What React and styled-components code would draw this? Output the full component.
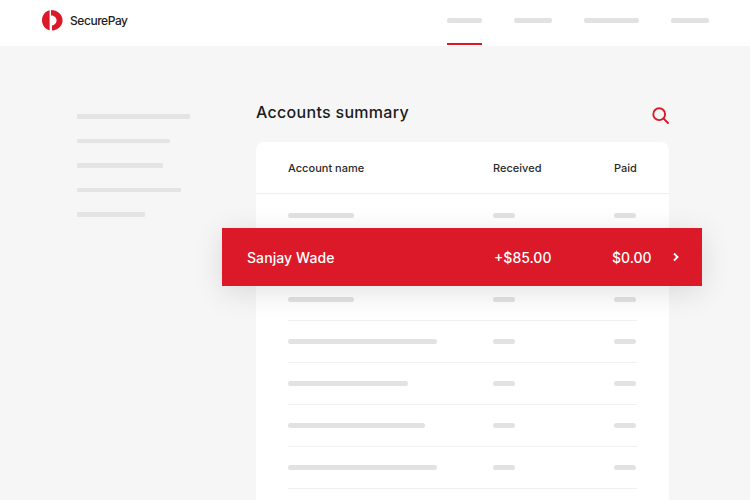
import React from 'react';
import styled, { createGlobalStyle } from 'styled-components';

const Global = createGlobalStyle`
  html, body { margin: 0; padding: 0; height: 100%; overflow: hidden; background: #f6f6f6; }
  body { font-family: Inter, "Liberation Sans", sans-serif; color: #1c1c1c; }
`;

const red = '#dc1928';
const skeleton = '#e2e2e2';

const Page = styled.div`
  width: 750px;
  height: 500px;
  overflow: hidden;
  position: relative;
  background: #f6f6f6;
`;

const Header = styled.header`
  height: 46px;
  box-sizing: border-box;
  padding: 0 41px 1px 42px;
  background: #fff;
  display: flex;
  align-items: center;
  justify-content: space-between;
`;

const Brand = styled.div`
  display: flex;
  align-items: center;
  gap: 7px;
  margin-bottom: 4px;
  font-size: 12px;
  font-weight: 500;
  letter-spacing: -0.45px;
  color: #222;
`;

const Nav = styled.nav`
  display: flex;
  height: 100%;
  gap: 32px;
`;

const NavItem = styled.div`
  height: 100%;
  box-sizing: border-box;
  width: ${({ $w }) => $w}px;
  padding-top: 18px;
  border-bottom: 2px solid ${({ $active }) => ($active ? red : 'transparent')};
`;

const NavBar = styled.div`
  height: 4.5px;
  border-radius: 2px;
  background: ${skeleton};
`;

const Body = styled.div`
  display: flex;
  padding: 0 81px 0 77px;
`;

const Sidebar = styled.aside`
  width: 179px;
  flex-shrink: 0;
  padding-top: 68px;
  display: flex;
  flex-direction: column;
  gap: 20px;
`;

const SideLine = styled.div`
  height: 4.5px;
  width: ${({ $w }) => $w}px;
  border-radius: 1px;
  background: #e4e4e4;
`;

const Main = styled.main`
  flex: 1;
  min-width: 0;
`;

const TitleRow = styled.div`
  height: 96px;
  box-sizing: border-box;
  padding-top: 55px;
  display: flex;
  justify-content: space-between;
  align-items: flex-start;
`;

const Title = styled.h1`
  margin: 0;
  font-size: 16px;
  line-height: 22px;
  font-weight: 500;
  letter-spacing: 0.3px;
  color: #1c1c1c;
`;

const SearchIcon = styled.svg`
  width: 17px;
  height: 17px;
  margin-top: 6px;
`;

const Card = styled.section`
  background: #fff;
  border-radius: 8px 8px 0 0;
  padding: 0 32px;
  height: 400px;
`;

const HeadRow = styled.div`
  display: grid;
  grid-template-columns: 205px 121px 1fr;
  align-items: center;
  height: 51px;
  margin: 0 -32px;
  padding: 0 32px;
  border-bottom: 1px solid #efefef;
`;

const Rows = styled.div`
  padding-top: 1px;
`;

const Row = styled.div`
  display: grid;
  grid-template-columns: 205px 121px 1fr;
  align-items: center;
  height: 41px;
  border-bottom: 1px solid #f0f0f0;
`;

const HeadCell = styled.div`
  font-size: 11px;
  font-weight: 450;
  letter-spacing: 0.02px;
  color: #2a2a2a;
`;

const Bar = styled.div`
  height: 5px;
  border-radius: 2.5px;
  width: ${({ $w }) => $w}px;
  background: ${skeleton};
`;

const Highlight = styled.div`
  position: absolute;
  left: 222px;
  top: 228px;
  width: 480px;
  height: 58px;
  box-sizing: border-box;
  padding: 0 22px 0 25px;
  background: ${red};
  color: #fff;
  display: grid;
  grid-template-columns: 247px 118px 1fr;
  align-items: center;
  font-size: 14px;
  font-weight: 450;
  box-shadow: 0 6px 30px rgba(0, 0, 0, 0.12);
`;

const Name = styled.div`
  letter-spacing: 0.08px;
`;

const Money = styled.div`
  display: flex;
  align-items: center;
  justify-content: space-between;
`;

const accounts = [66, null, 66, 149, 120, 137, 149, 120, 137, 149];

export default function App() {
  return (
    <Page>
      <Global />
      <Header>
        <Brand>
          <svg width="21" height="21" viewBox="0 0 21 21">
            <path d="M7.6 .3C3.2 1.3 0 5.3 0 10.2c0 4.9 3.2 9 7.6 10.2z" fill={red} />
            <path d="M9 0c6.3 0 11.6 4.6 11.6 10.2 0 5.3-4.4 9.6-10.6 10.4v-5.2c2.6-.4 4.6-2.4 4.6-5 0-2.7-2.5-4.8-5.6-4.8z" fill={red} />
          </svg>
          SecurePay
        </Brand>
        <Nav>
          <NavItem $w={35} $active><NavBar /></NavItem>
          <NavItem $w={38}><NavBar /></NavItem>
          <NavItem $w={55}><NavBar /></NavItem>
          <NavItem $w={38}><NavBar /></NavItem>
        </Nav>
      </Header>
      <Body>
        <Sidebar>
          <SideLine $w={113} />
          <SideLine $w={93} />
          <SideLine $w={86} />
          <SideLine $w={104} />
          <SideLine $w={68} />
        </Sidebar>
        <Main>
          <TitleRow>
            <Title>Accounts summary</Title>
            <SearchIcon viewBox="0 0 17 17" fill="none" stroke={red} strokeWidth="1.9">
              <circle cx="7.2" cy="7.2" r="5.9" />
              <path d="M11.4 11.4 L16 16" strokeLinecap="round" />
            </SearchIcon>
          </TitleRow>
          <Card>
            <HeadRow>
              <HeadCell>Account name</HeadCell>
              <HeadCell>Received</HeadCell>
              <HeadCell>Paid</HeadCell>
            </HeadRow>
            <Rows>
              {accounts.map((w, i) => (
                <Row key={i}>
                  {w && <Bar $w={w} />}
                  {w && <Bar $w={22} />}
                  {w && <Bar $w={22} />}
                </Row>
              ))}
            </Rows>
          </Card>
        </Main>
      </Body>
      <Highlight>
        <Name>Sanjay Wade</Name>
        <div>+$85.00</div>
        <Money>
          $0.00
          <svg width="8" height="10" viewBox="0 0 8 10" fill="none" stroke="#fff" strokeWidth="1.9">
            <path d="M2 1.5 L5.5 5 L2 8.5" />
          </svg>
        </Money>
      </Highlight>
    </Page>
  );
}
